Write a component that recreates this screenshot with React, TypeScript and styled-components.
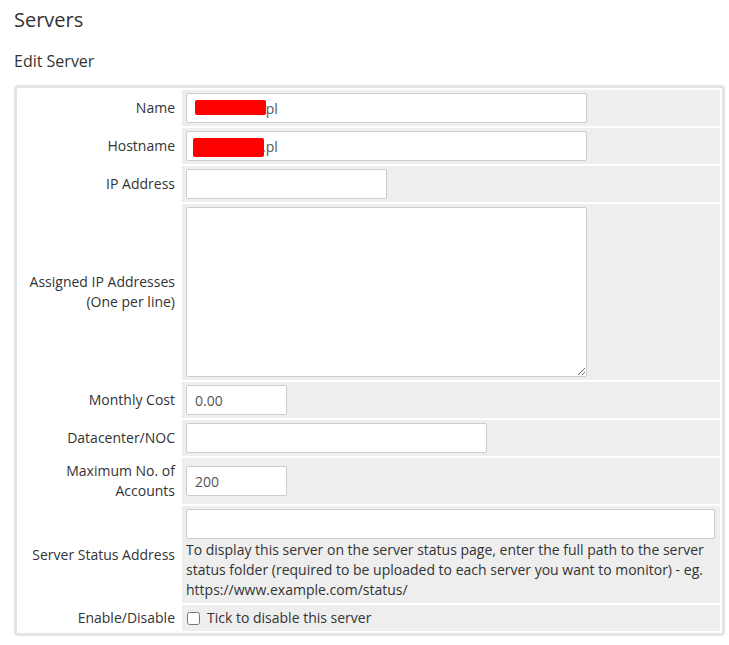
import React from "react";
import styled, { createGlobalStyle } from "styled-components";

const GlobalStyle = createGlobalStyle`
  html, body {
    margin: 0;
    padding: 0;
    background: #ffffff;
  }
  body {
    font-family: "Open Sans", "Liberation Sans", sans-serif;
    font-size: 14px;
    color: #333333;
  }
  * {
    box-sizing: border-box;
  }
`;

const Page = styled.div`
  padding: 8px 4px 8px 14px;
`;

const Title = styled.h1`
  margin: 0;
  font-size: 20px;
  line-height: 24px;
  font-weight: 400;
  color: #333333;
`;

const SubTitle = styled.h2`
  margin: 18px 0 0;
  font-size: 16px;
  line-height: 22px;
  font-weight: 400;
  color: #333333;
`;

const Card = styled.div`
  margin-top: 13px;
  width: 711px;
  border: 3px solid #e1e5e8;
  border-radius: 4px;
  background: #ffffff;
`;

const FormGrid = styled.div`
  display: grid;
  grid-template-columns: 161px 1fr;
  gap: 2px;
  padding: 2px;
`;

const FieldLabel = styled.label`
  display: flex;
  align-items: center;
  justify-content: flex-end;
  text-align: right;
  padding: 3px 5px 3px 8px;
  line-height: 20px;
  color: #333333;
`;

const FieldArea = styled.div`
  display: flex;
  flex-direction: column;
  justify-content: center;
  background: #eeeeee;
  padding: 3px 4px;
  line-height: 20px;
`;

const Input = styled.input<{ $width: number; $indent?: number }>`
  display: block;
  width: ${(p) => p.$width}px;
  max-width: 100%;
  height: 30px;
  padding: 0 8px 0 ${(p) => p.$indent ?? 8}px;
  border: 1px solid #cccccc;
  border-radius: 2px;
  background: #ffffff;
  font-family: inherit;
  font-size: 14px;
  color: #555555;
  outline: none;
`;

const TextArea = styled.textarea`
  display: block;
  width: 401px;
  height: 170px;
  padding: 6px 8px;
  border: 1px solid #cccccc;
  border-radius: 2px;
  background: #ffffff;
  font-family: inherit;
  font-size: 14px;
  color: #555555;
  outline: none;
`;

const MaskedField = styled.div`
  position: relative;
  width: 401px;
`;

// red block covering the hidden part of the domain
const Redaction = styled.span<{ $left: number; $top: number; $w: number; $h: number }>`
  position: absolute;
  left: ${(p) => p.$left}px;
  top: ${(p) => p.$top}px;
  width: ${(p) => p.$w}px;
  height: ${(p) => p.$h}px;
  background: #ff0000;
  border-radius: 2px;
`;

const HelpText = styled.div`
  margin-top: 1px;
  padding-right: 8px;
  color: #333333;
`;

const CheckLabel = styled.label`
  display: flex;
  align-items: center;
  gap: 7px;
  color: #333333;
`;

const CheckBox = styled.input`
  margin: 0 0 0 1px;
  width: 13px;
  height: 13px;
`;

export default function App() {
  return (
    <>
      <GlobalStyle />
      <Page>
        <Title>Servers</Title>
        <SubTitle>Edit Server</SubTitle>
        <Card>
          <FormGrid>
            <FieldLabel>Name</FieldLabel>
            <FieldArea>
              <MaskedField>
                <Input $width={401} $indent={75} defaultValue=".pl" />
                <Redaction $left={9} $top={7} $w={71} $h={15} />
              </MaskedField>
            </FieldArea>

            <FieldLabel>Hostname</FieldLabel>
            <FieldArea>
              <MaskedField>
                <Input $width={401} $indent={75} defaultValue=".pl" />
                <Redaction $left={7} $top={7} $w={71} $h={19} />
              </MaskedField>
            </FieldArea>

            <FieldLabel>IP Address</FieldLabel>
            <FieldArea>
              <Input $width={201} />
            </FieldArea>

            <FieldLabel>Assigned IP Addresses (One per line)</FieldLabel>
            <FieldArea>
              <TextArea />
            </FieldArea>

            <FieldLabel>Monthly Cost</FieldLabel>
            <FieldArea>
              <Input $width={101} defaultValue="0.00" />
            </FieldArea>

            <FieldLabel>Datacenter/NOC</FieldLabel>
            <FieldArea>
              <Input $width={301} />
            </FieldArea>

            <FieldLabel>Maximum No. of Accounts</FieldLabel>
            <FieldArea>
              <Input $width={101} defaultValue="200" />
            </FieldArea>

            <FieldLabel>Server Status Address</FieldLabel>
            <FieldArea>
              <Input $width={529} />
              <HelpText>
                To display this server on the server status page, enter the full
                path to the server status folder (required to be uploaded to each
                server you want to monitor) - eg. https://www.example.com/status/
              </HelpText>
            </FieldArea>

            <FieldLabel>Enable/Disable</FieldLabel>
            <FieldArea>
              <CheckLabel>
                <CheckBox type="checkbox" />
                Tick to disable this server
              </CheckLabel>
            </FieldArea>
          </FormGrid>
        </Card>
      </Page>
    </>
  );
}
